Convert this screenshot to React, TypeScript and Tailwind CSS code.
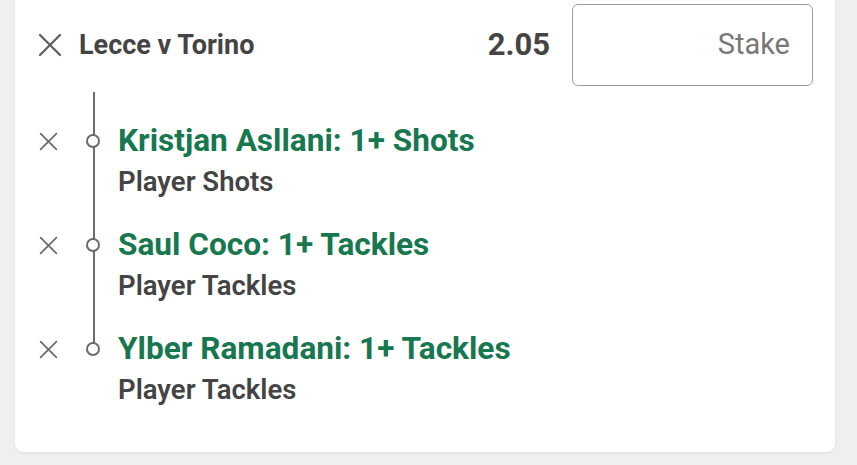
const legs = [
  { title: "Kristjan Asllani: 1+ Shots", market: "Player Shots" },
  { title: "Saul Coco: 1+ Tackles", market: "Player Tackles" },
  { title: "Ylber Ramadani: 1+ Tackles", market: "Player Tackles" },
];

function Cross({ size, className }: { size: number; className?: string }) {
  return (
    <svg width={size} height={size} viewBox="0 0 24 24" className={className}>
      <path d="M2 2 L22 22 M22 2 L2 22" stroke="currentColor" strokeWidth={2.2} strokeLinecap="round" fill="none" />
    </svg>
  );
}

function Leg({ title, market }: { title: string; market: string }) {
  return (
    <div className="flex items-start">
      <div className="flex h-[36px] shrink-0 items-center pl-[24px]">
        <Cross size={19} className="text-[#6b6b6b]" />
      </div>
      <div className="flex h-[36px] shrink-0 items-center pl-[28px] pr-[18px]">
        <span className="relative z-10 block h-[14px] w-[14px] rounded-full border-2 border-[#6b6b6b] bg-white" />
      </div>
      <div>
        <div className="text-[31.6px] font-bold leading-[36px] text-[#17774e]">{title}</div>
        <div className="mt-[7px] text-[27.5px] font-semibold leading-[32px] text-[#444]">{market}</div>
      </div>
    </div>
  );
}

export default function App() {
  return (
    <div className="h-[465px] w-full bg-[#efefef] font-['Roboto',sans-serif]">
      <div className="ml-[15px] h-[452px] w-[820px] rounded-b-lg bg-white shadow-[0_1px_2px_rgba(0,0,0,0.08)]">
        <div className="flex items-center pt-[4px] pr-[22px]">
          <div className="flex shrink-0 items-center pl-[23px] pr-[17px]">
            <Cross size={24} className="text-[#5c5c5c]" />
          </div>
          <div className="flex-1 text-[27px] font-bold text-[#444]">Lecce v Torino</div>
          <div className="mr-[22px] text-[31px] font-bold text-[#444]">2.05</div>
          <div className="flex h-[82px] w-[241px] items-center justify-end rounded-md border border-[#9b9b9b] pr-[22px] text-[29px] text-[#777]">
            Stake
          </div>
        </div>
        <div className="relative mt-[37px] flex flex-col gap-[29px]">
          <div className="absolute left-[78px] top-[-31px] h-[251px] w-[2px] bg-[#6b6b6b]" />
          {legs.map((l) => (
            <Leg key={l.title} {...l} />
          ))}
        </div>
      </div>
    </div>
  );
}
